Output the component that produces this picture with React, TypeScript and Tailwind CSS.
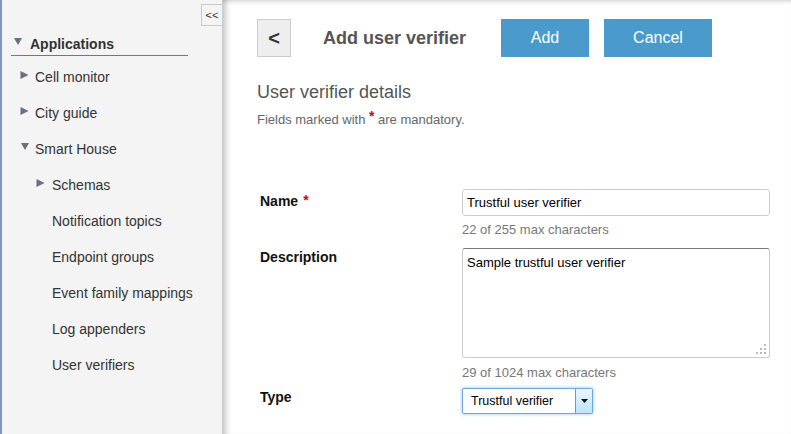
import React from "react";

const RightTri = () => (
  <svg width="9" height="8" viewBox="0 0 9 8" className="shrink-0 mt-[12px]">
    <polygon points="0.5,0 8.5,4 0.5,8" fill="#6a7080" />
  </svg>
);

const DownTri = ({ className = "" }: { className?: string }) => (
  <svg width="8" height="7" viewBox="0 0 8 7" className={`shrink-0 ${className}`}>
    <polygon points="0,0 8,0 4,7" fill="#6a7080" />
  </svg>
);

const leaves = [
  "Notification topics",
  "Endpoint groups",
  "Event family mappings",
  "Log appenders",
  "User verifiers",
];

export default function App() {
  return (
    <div className="w-[791px] h-[434px] flex overflow-hidden bg-white font-['Liberation_Sans',Arial,sans-serif]">
      {/* Sidebar */}
      <aside className="w-[223px] shrink-0 h-full bg-[#f4f4f4] border-l-2 border-l-[#7d98bb] border-r border-r-[#cdcdcd] flex flex-col relative z-10 text-[#333] text-[14px]">
        <div className="pt-[4px] flex justify-end">
          <div className="w-[21px] h-[22px] border border-r-0 border-[#c9c9c9] flex items-center justify-center text-[11px] leading-none text-[#333]">
            &lt;&lt;
          </div>
        </div>
        <div className="mt-[10px] ml-[9px] w-[177px] pl-[3px] pb-[3px] border-b border-[#777] flex items-start">
          <DownTri className="mt-[2px]" />
          <span className="ml-[8px] font-bold leading-[16px] h-[16px]">Applications</span>
        </div>
        <div className="mt-[3px] flex flex-col">
          <div className="h-[36px] pl-[18px] flex items-start">
            <RightTri />
            <span className="ml-[6px] leading-[36px]">Cell monitor</span>
          </div>
          <div className="h-[36px] pl-[18px] flex items-start">
            <RightTri />
            <span className="ml-[6px] leading-[36px]">City guide</span>
          </div>
          <div className="h-[36px] pl-[18px] flex items-start">
            <DownTri className="mt-[12px] ml-[1px]" />
            <span className="ml-[6px] leading-[36px]">Smart House</span>
          </div>
          <div className="h-[36px] pl-[34px] flex items-start">
            <RightTri />
            <span className="ml-[7px] leading-[36px]">Schemas</span>
          </div>
          {leaves.map((l) => (
            <div key={l} className="h-[36px] pl-[50px] leading-[36px]">
              {l}
            </div>
          ))}
        </div>
      </aside>

      {/* Main */}
      <main className="flex-1 h-full bg-white pl-[34px] pt-[19px] shadow-[inset_8px_0_7px_-6px_rgba(0,0,0,0.28),inset_0_5px_5px_-4px_rgba(0,0,0,0.2)]">
        <div className="flex items-center h-[38px]">
          <div className="w-[34px] h-[38px] bg-[#eeeeee] border border-[#cccccc] flex items-center justify-center text-[20px] font-bold text-[#333] leading-none">
            &lt;
          </div>
          <div className="ml-[32px] w-[178px] text-[18px] font-bold text-[#555] leading-[22px]">
            Add user verifier
          </div>
          <div className="w-[88px] h-[38px] bg-[#4a9bcc] text-white text-[16px] flex items-center justify-center">
            Add
          </div>
          <div className="ml-[15px] w-[108px] h-[38px] bg-[#4a9bcc] text-white text-[16px] flex items-center justify-center">
            Cancel
          </div>
        </div>

        <div className="mt-[23px] h-[24px] text-[18px] leading-[24px] text-[#555]">User verifier details</div>
        <div className="mt-[8px] h-[16px] text-[13px] leading-[16px] text-[#666]">
          Fields marked with{" "}
          <span className="text-[#d0021b] font-bold text-[14px] leading-[0] align-[3px]">*</span> are
          mandatory.
        </div>

        {/* Form */}
        <div className="mt-[61px] flex flex-col">
          <div className="flex">
            <div className="w-[205px] h-[20px] pl-[3px] pt-[4px] text-[14px] font-bold leading-[16px] text-[#111]">
              Name
              <span className="ml-[5px] text-[#d0021b] text-[14px] font-bold leading-[0] align-[1px]">*</span>
            </div>
            <div className="w-[308px] flex flex-col">
              <input
                readOnly
                value="Trustful user verifier"
                className="h-[27px] w-[308px] border border-[#cccccc] rounded-[3px] px-[4px] text-[13px] text-black outline-none"
              />
              <div className="mt-[6px] h-[16px] text-[13px] leading-[16px] text-[#777]">22 of 255 max characters</div>
            </div>
          </div>

          <div className="flex mt-[10px]">
            <div className="w-[205px] pl-[3px] pt-[1px] text-[14px] font-bold leading-[16px] text-[#111]">
              Description
            </div>
            <div className="w-[308px] flex flex-col">
              <div className="relative h-[110px]">
                <textarea
                  readOnly
                  value="Sample trustful user verifier"
                  className="block w-full h-[110px] resize-none border border-[#cccccc] border-t-[#7a7a7a] rounded-[3px] px-[4px] pt-[6px] text-[13px] leading-[16px] text-black outline-none"
                />
                <svg width="11" height="11" viewBox="0 0 11 11" className="absolute right-[3px] bottom-[3px]">
                  <rect x="8" y="0" width="2" height="2" fill="#bbbbbb" />
                  <rect x="4" y="4" width="2" height="2" fill="#bbbbbb" />
                  <rect x="8" y="4" width="2" height="2" fill="#bbbbbb" />
                  <rect x="0" y="8" width="2" height="2" fill="#bbbbbb" />
                  <rect x="4" y="8" width="2" height="2" fill="#bbbbbb" />
                  <rect x="8" y="8" width="2" height="2" fill="#bbbbbb" />
                </svg>
              </div>
              <div className="mt-[7px] h-[16px] text-[13px] leading-[16px] text-[#777]">29 of 1024 max characters</div>
            </div>
          </div>

          <div className="flex mt-[7px]">
            <div className="w-[205px] pl-[3px] pt-[1px] text-[14px] font-bold leading-[16px] text-[#111]">
              Type
            </div>
            <div className="w-[131px] h-[26px] border border-[#6fa8e0] rounded-[2px] shadow-[0_0_3px_1px_rgba(110,170,230,0.45)] flex bg-white">
              <div className="flex-1 pl-[8px] text-[12.5px] leading-[24px] text-black">Trustful verifier</div>
              <div className="w-[17px] h-[24px] border-l border-[#569de5] bg-gradient-to-b from-[#eaf6fd] to-[#bde3fb] flex items-center justify-center">
                <svg width="7" height="4" viewBox="0 0 7 4">
                  <polygon points="0,0 7,0 3.5,4" fill="#111" />
                </svg>
              </div>
            </div>
          </div>
        </div>
      </main>
    </div>
  );
}
